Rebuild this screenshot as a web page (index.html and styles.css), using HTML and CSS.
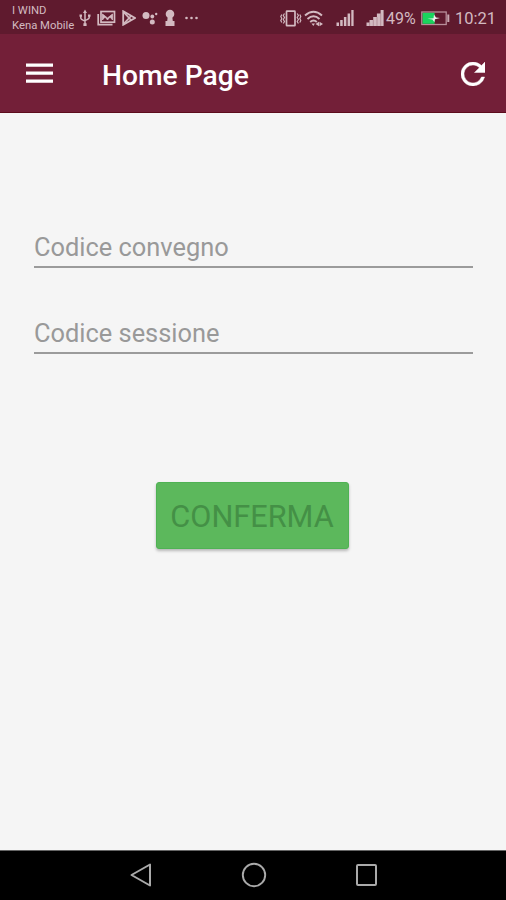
FILE: index.html
```
<!DOCTYPE html>
<html lang="it">
<head>
    <meta charset="UTF-8">
    <meta name="viewport" content="width=device-width, initial-scale=1.0">
    <title>Home Page</title>
    <link rel="stylesheet" href="styles.css">
</head>
<body>
    <div class="status-bar">
        <div class="carrier">
            <div>I WIND</div>
            <div>Kena Mobile</div>
        </div>
        <div class="notifications">
            <!-- usb -->
            <svg width="12" height="18" viewBox="0 0 12 18" fill="none" stroke="currentColor" stroke-width="1.5">
                <path d="M6 3v12M1.800 6.500v2.500q0 1.500 4.200 3M10.200 6.500v2q0 1.500-4.200 3"/>
                <path d="M6 0.500l2 3.500H4zM4.400 14.300h3.200v2.700H4.400zM0.500 5.500h2.500v2.200h-2.500zM9 5.500h2.500v2.200h-2.500z" fill="currentColor" stroke="none"/>
            </svg>
            <!-- foto -->
            <svg width="19" height="16" viewBox="0 0 19 16" fill="none" stroke="currentColor" stroke-width="1.700">
                <path d="M1.200 4v10.700H15.500"/>
                <rect x="4" y="1.500" width="13.500" height="10.700"/>
                <path d="M5.500 10V4l5 4 5-4v6l-2.500-3-2.500 3-2.500-3z" fill="currentColor" stroke-width="0.800"/>
            </svg>
            <!-- play -->
            <svg width="14" height="16" viewBox="0 0 14 16" fill="none" stroke="currentColor" stroke-width="1.800">
                <path d="M1.200 1.200v13.600L13 8z"/>
                <path d="M1.500 2l7.500 8M1.500 14L9 6"/>
            </svg>
            <!-- assistente -->
            <svg width="16" height="14" viewBox="0 0 16 14" fill="currentColor">
                <circle cx="4" cy="4.500" r="3.500"/>
                <circle cx="10.300" cy="5.500" r="1.900"/>
                <circle cx="10.300" cy="11" r="2.500"/>
                <circle cx="14.200" cy="3" r="1.200"/>
            </svg>
            <!-- serratura -->
            <svg class="keyhole" width="10" height="18" viewBox="0 0 10 18" fill="currentColor">
                <circle cx="5" cy="5" r="4.300"/>
                <path d="M2.700 8h4.600l.5 4H9.500v5H.5v-5h1.700z"/>
            </svg>
            <svg class="more" width="13" height="4" viewBox="0 0 13 4" fill="currentColor">
                <circle cx="1.500" cy="2" r="1.300"/>
                <circle cx="6.500" cy="2" r="1.300"/>
                <circle cx="11.500" cy="2" r="1.300"/>
            </svg>
        </div>
        <div class="system">
            <!-- vibrazione -->
            <svg class="vibrate" width="22" height="17" viewBox="0 0 22 17" fill="none" stroke="currentColor" stroke-width="1.700">
                <rect x="6.500" y="1.200" width="8.500" height="14.500" rx=".5"/>
                <path d="M4.500 3.500L3.300 5.500l1.200 2-1.200 2 1.200 2-1.200 2M1.800 4.500L.8 6.500l1 2-1 2 1 2M17.200 3.500l1.200 2-1.200 2 1.200 2-1.200 2 1.200 2M19.800 4.500l1 2-1 2 1 2-1 2" stroke-width="1.200"/>
            </svg>
            <!-- wifi -->
            <svg class="wifi" width="20" height="17" viewBox="0 0 20 17" fill="none" stroke="currentColor" stroke-width="1.900">
                <path d="M1 5.500Q9.500-2 18 5.500M3.500 9Q9.500 3.500 15.500 9M6.200 12Q9.500 9 12.800 12"/>
                <path d="M7.500 13.500h3.500L9.300 16zM11.500 14l3.500-2.200v4.400zM19 14l-3.500-2.200v4.400z" fill="currentColor" stroke="none"/>
            </svg>
            <!-- segnale sim 1 -->
            <svg class="signal" width="18" height="16" viewBox="0 0 18 16" fill="currentColor">
                <path d="M.5 12.500h2.500V16H.5zM4.200 10h2.500v6H4.200zM7.900 7h2.500v9H7.900zM11.600 3.500h2.500V16h-2.500zM15.300 0h2.300v16h-2.300z"/>
            </svg>
            <!-- segnale sim 2 -->
            <svg class="signal" width="18" height="16" viewBox="0 0 18 16" fill="currentColor">
                <path d="M.5 12.500h3V10h3.700V7h3.700V3.500h3.700V0h3v16H.5z"/>
                <path d="M3.600 12.500V16M7.300 10v6M11 7v9M14.700 3.500V16" stroke="#5f1a2e" stroke-width=".5" opacity=".5"/>
            </svg>
            <span class="percent">49%</span>
            <svg class="battery" width="29" height="15" viewBox="0 0 29 15">
                <rect x=".8" y="1" width="24.400" height="12.500" fill="none" stroke="#b98f9b" stroke-width="1.300"/>
                <rect x="1.600" y="1.800" width="12" height="11" fill="#19d45d"/>
                <path d="M6.500 7.700l6-.5.5-3.700 2 3 4 .6-5 1.200-.6 3-2-2.800z" fill="#eee"/>
                <path d="M26.300 3.500h2v7.500h-2z" fill="#c9a8b1"/>
            </svg>
            <span class="clock">10:21</span>
        </div>
    </div>

    <div class="app-bar">
        <svg class="menu" width="27" height="21" viewBox="0 0 27 21" fill="currentColor">
            <path d="M0 .5h27v3.300H0zM0 8.500h27v3.300H0zM0 16.500h27v3.300H0z"/>
        </svg>
        <h1>Home Page</h1>
        <svg class="refresh" width="24" height="24" viewBox="4 4 16 16" fill="currentColor" stroke="currentColor" stroke-width=".3">
            <path d="M17.650 6.350A7.960 7.960 0 0 0 12 4a8 8 0 1 0 7.730 10h-2.080A6 6 0 1 1 12 6c1.660 0 3.140.69 4.220 1.780L13 11h7V4z"/>
        </svg>
    </div>

    <div class="content">
        <input class="field" type="text" placeholder="Codice convegno">
        <input class="field" type="text" placeholder="Codice sessione">
        <button class="btn">CONFERMA</button>
    </div>

    <div class="nav-bar">
        <svg width="23" height="24" viewBox="0 0 23 24" fill="none" stroke="currentColor" stroke-width="2">
            <path d="M21 1.500v21L2.500 12z" stroke-linejoin="round"/>
        </svg>
        <svg width="26" height="26" viewBox="0 0 26 26" fill="none" stroke="currentColor" stroke-width="1.900">
            <circle cx="13" cy="13" r="11.200"/>
        </svg>
        <svg width="22" height="24" viewBox="0 0 22 24" fill="none" stroke="currentColor" stroke-width="2">
            <rect x="1" y="2" width="19" height="20" rx="1"/>
        </svg>
    </div>
</body>
</html>
```

FILE: styles.css
```
* {
    box-sizing: border-box;
}
body {
    margin: 0;
    height: 900px;
    display: flex;
    flex-direction: column;
    overflow: hidden;
    background: #f5f5f5;
    font-family: Roboto, sans-serif;
}
svg {
    display: block;
    flex: none;
}
.status-bar {
    height: 34px;
    display: flex;
    align-items: center;
    padding: 2px 10px 0 12px;
    background: #5f1a2e;
    color: #d3bac1;
}
.carrier {
    width: 67px;
    font-size: 11.300px;
    line-height: 15px;
    white-space: nowrap;
}
.notifications {
    display: flex;
    align-items: center;
    gap: 6px;
}
.notifications .play {
    margin-left: -1px;
}
.notifications .keyhole {
    margin-left: 1px;
}
.notifications .more {
    margin-left: 4px;
}
.system {
    display: flex;
    align-items: center;
    margin-left: auto;
}
.wifi { margin-left: 2px; }
.signal { margin-left: 12px; }
.percent {
    width: 37px;
    padding-left: 2px;
    font-size: 16px;
}
.clock {
    width: 41px;
    margin-left: 5px;
    font-size: 16.500px;
}
.app-bar {
    height: 79px;
    display: flex;
    align-items: center;
    padding: 0 21px 0 26px;
    background: #731f38;
    border-bottom: 1px solid #5c0c1c;
    color: #fff;
}
.app-bar h1 {
    margin: 5px 0 0 49px;
    font-size: 28.200px;
    font-weight: 500;
    line-height: 34px;
}
.refresh {
    margin-left: auto;
    margin-top: 1px;
}
.content {
    flex: 1;
    display: flex;
    flex-direction: column;
    padding: 114px 33px 0 34px;
}
.field {
    height: 41px;
    margin-bottom: 45px;
    padding: 1px 0 0;
    border: 0;
    border-bottom: 2px solid #9b9b9b;
    background: none;
    font-family: inherit;
    font-size: 25.400px;
}
.field::placeholder {
    color: #999;
    opacity: 1;
}
.btn {
    align-self: center;
    width: 193px;
    height: 67px;
    margin: 83px 0 0 -3px;
    padding: 1px 0 0;
    border: 1px solid #4fb254;
    border-radius: 3px;
    background: #5cb85c;
    box-shadow: 0 2px 3px rgba(0,0,0,0.25);
    color: #449046;
    font-family: inherit;
    font-size: 30.700px;
}
.nav-bar {
    height: 50px;
    display: flex;
    align-items: center;
    justify-content: center;
    gap: 89px;
    padding-bottom: 1px;
    border-top: 1px solid #666;
    background: #000;
    color: #aaa;
}
```
